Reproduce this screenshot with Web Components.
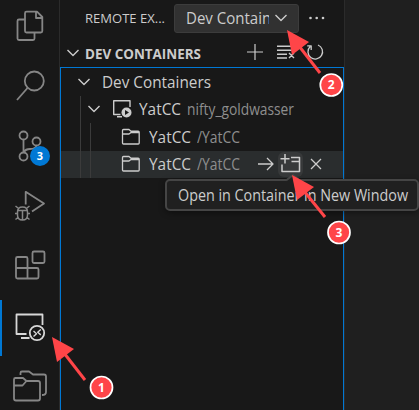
<!DOCTYPE html>
<html lang="en"><head><meta charset="utf-8"><title>Remote Explorer</title>
<style>html,body{margin:0;height:100%;overflow:hidden;background:#1f1f1f}body{font-family:"Open Sans","Noto Sans",sans-serif;color:#ccc}</style></head>
<body><remote-window></remote-window>
<script>
const define = (name, html, setup) => customElements.define(name, class extends HTMLElement {
  connectedCallback() {
    if (this.shadowRoot) return;
    this.attachShadow({mode: 'open'}).innerHTML = html;
    if (setup) setup(this, this.shadowRoot);
  }
});

const icons = {
  files: [60,60, '<path d="M25.500 19.500H19q-1.500 0-1.500 1.500v17.500q0 1.500 1.500 1.500h14q1.500 0 1.500-1.500V33M26.500 11.700H37L42.300 17v14q0 1.500-1.500 1.500H26.500Q25 32.500 25 31V13.200q0-1.500 1.500-1.500ZM36 12v6h6"/>'],
  search: [60,60, '<circle cx="34.300" cy="21" r="9.500"/><path d="M27.500 28 17 40"/>'],
  source: [60,60, '<circle cx="23.500" cy="15.500" r="4"/><circle cx="36.500" cy="21.500" r="4"/><circle cx="23.500" cy="36.500" r="4"/><path d="M23.500 19.500v13M24 32q1.500-3 6-3 6.500 0 6.500-4"/>'],
  debug: [60,60, '<path d="M25.700 24.500V11.800L44 23.500 32 31.500"/><path d="M17.500 32q0-5 5-5t5 5v3q0 5-5 5t-5-5ZM18 30.500h9M22.500 31v9M18 28l-2.500-2M27 28l2.500-2M17.500 33.500H15M27.500 33.500H30M18 37.500l-2.500 2M27 37.500l2.500 2" stroke-width="1.500"/>'],
  extensions: [60,60, '<path d="M17.500 17h8.500q1.500 0 1.500 1.500V28H37q1.500 0 1.500 1.500V37q0 1.500-1.500 1.500H17.500Q16 38.500 16 37V18.500Q16 17 17.500 17ZM16 28h11.500v10.500"/><rect x="32.500" y="11" width="12" height="11.500" rx="1.500" transform="translate(0 .5)"/>'],
  remote: [60,60, '<path d="M26.500 34H16.500V14.500H42.500V25M21 38h8.500"/><circle cx="37" cy="33" r="7.200"/><path d="M33.500 31l3 2.700-3 2.700M40.800 29.500l-3.100 2.700 3.100 2.700" stroke-width="1.400"/>'],
  folders: [60,60, '<path transform="translate(0 1)" d="M15.500 17h7.500l3.500 3H38q2 0 2 2v15.500q0 2-2 2H16q-2 0-2-2V18.500q0-1.500 1.500-1.500ZM14 24.500h8.500l3.500-4M20.500 14v-2q0-1.500 1.500-1.500h7l4 3H44q2 0 2 2V31q0 3-4 3"/>'],
  chevron: [14,10, '<path d="m1.500 2 5.500 5.500L12.500 2" stroke-width="1.400"/>'],
  plus: [18,18, '<path d="M9 1v16M1 9h16" stroke-width="1.200"/>'],
  clear: [20,18, '<path d="M1 3.200h16M1 7.200h16M1 11.200h10M1 15h10M13 10l5 5M18 10l-5 5" stroke-width="1.400"/>'],
  refresh: [18,18, '<path d="M4.200 3.500A7.300 7.300 0 1 0 12 2M1.200 2.800h4V7" stroke-width="1.300"/>'],
  more: [18,6, '<g fill="currentColor" stroke="none"><circle cx="2.500" cy="3" r="1.300"/><circle cx="8.700" cy="3" r="1.300"/><circle cx="15" cy="3" r="1.300"/></g>'],
  container: [20,20, '<path d="M8.500 15.500H1.700V1.700H18V8M5 17.800h5" stroke-width="1.400"/><circle cx="14.500" cy="13.500" r="5" fill="currentColor" stroke="none"/><path d="m13 11 4 2.500-4 2.500Z" fill="#181818" stroke="none"/>'],
  folder: [20,18, '<path d="M2.500 1.500H8l2 1.700h7.200q1 0 1 1V15q0 1-1 1H2.500q-1 0-1-1V2.500q0-1 1-1ZM1.500 6H8l2-1.500h8" stroke-width="1.300"/>'],
  arrow: [18,16, '<path d="M1 8h15M10 2l6 6-6 6" stroke-width="1.300"/>'],
  newwin: [24,20, '<path d="M6 0v9.500M1.500 4.700h9M12 3.500h8.500V17.500H3V10.500M12.500 7.500H20.500" stroke-width="1.500"/>'],
  close: [12,12, '<path d="m1 1 10 10M11 1 1 11" stroke-width="1.300"/>']
};
define('ui-icon', '<style>:host{display:block;flex:none}svg{display:block;fill:none;stroke:currentColor;stroke-width:1.800;stroke-linejoin:round}</style><div></div>', (el, root) => {
  const [w,h,shape] = icons[el.getAttribute('name')];
  root.querySelector('div').innerHTML = `<svg width="${w}" height="${h}" viewBox="0 0 ${w} ${h}">${shape}</svg>`;
});

/* A single line of text condensed to the width given by its "fit" attribute. */
define('ui-label', '<style>:host{display:block;flex:none;white-space:pre;line-height:22px}span{display:inline-block;transform-origin:0 50%}</style><span><slot></slot></span>', (el, root) => {
  const span = root.querySelector('span'), fit = +el.getAttribute('fit');
  el.style.width = fit + 'px';
  span.style.transform = `scaleX(${fit / span.getBoundingClientRect().width})`;
});

define('activity-entry', `<style>:host{display:block;flex:none;position:relative;width:59px;height:60px;color:#868686}:host([active]){color:#d7d7d7;box-shadow:inset 2px 0 #0078d4}
b{position:absolute;left:30px;top:26px;width:20px;height:20px;border-radius:50%;background:#0078d4;color:#fff;font:700 11px/20px "Open Sans",sans-serif;text-align:center}b:empty{display:none}</style><slot></slot><b></b>`, (el, root) => {
  root.querySelector('b').textContent = el.getAttribute('badge') || '';
});
define('activity-bar', `<style>:host{display:flex;flex-direction:column;box-sizing:border-box;width:60px;height:410px;flex:none;overflow:hidden;background:#181818;border-right:1px solid #2b2b2b}</style>
<activity-entry><ui-icon name="files"></ui-icon></activity-entry>
<activity-entry><ui-icon name="search"></ui-icon></activity-entry>
<activity-entry badge="3"><ui-icon name="source"></ui-icon></activity-entry>
<activity-entry><ui-icon name="debug"></ui-icon></activity-entry>
<activity-entry><ui-icon name="extensions"></ui-icon></activity-entry>
<activity-entry active style="height:56px;margin-bottom:4px"><ui-icon name="remote"></ui-icon></activity-entry>
<activity-entry><ui-icon name="folders"></ui-icon></activity-entry>`);

define('tree-row', `<style>:host{display:flex;box-sizing:border-box;height:27.500px;align-items:center;font-size:15.800px;position:relative}:host([selected]){background:#2a2d2e}
i{position:absolute;top:0;bottom:0;width:1px;background:#3b3b3b}.a{left:19px}.b{left:29px}:host([depth="0"]) i,:host([depth="1"]) .b{display:none}</style><i class="a"></i><i class="b"></i><slot></slot>`);

define('container-tree', `<style>:host{display:block;box-sizing:border-box;height:343px;border:1px solid #0078d4;border-bottom:0}
.muted{color:#8e8e8e}.chev{margin-left:16px}.f{margin-left:60px}.name{margin-left:7.500px}.path{margin-left:6.500px}.tool{display:grid;place-items:center;width:25px;height:25px;border-radius:6px;background:#37393a;margin-left:3px}</style>
<tree-row depth="0"><ui-icon class="chev" name="chevron"></ui-icon><ui-label fit="109" style="margin-left:10.500px">Dev Containers</ui-label></tree-row>
<tree-row depth="1"><ui-icon name="chevron" style="margin-left:26px"></ui-icon><ui-icon name="container" style="margin-left:11px"></ui-icon><ui-label fit="42" style="margin-left:6.500px">YatCC</ui-label><ui-label class="muted path" fit="107">nifty_goldwasser</ui-label></tree-row>
<tree-row depth="2"><ui-icon class="f" name="folder"></ui-icon><ui-label class="name" fit="42">YatCC</ui-label><ui-label class="muted path" fit="43">/YatCC</ui-label></tree-row>
<tree-row depth="2" selected><ui-icon class="f" name="folder"></ui-icon><ui-label class="name" fit="42">YatCC</ui-label><ui-label class="muted path" fit="43">/YatCC</ui-label><ui-icon name="arrow" style="margin-left:17px"></ui-icon><span class="tool"><ui-icon name="newwin"></ui-icon></span><ui-icon name="close" style="margin-left:7px"></ui-icon></tree-row>`);

define('side-bar', `<style>:host{display:block;box-sizing:border-box;width:285px;height:410px;flex:none;background:#181818;border-right:1px solid #2b2b2b}
header{display:flex;align-items:center;height:36px;padding-left:25px;font-size:13.500px}.select{box-sizing:border-box;display:flex;align-items:center;width:125px;height:29px;margin-left:9px;background:#313131;border:1px solid #3c3c3c;border-radius:3px;font-size:16.300px}
.clip{width:83px;overflow:hidden;margin-left:11px}.section{display:flex;align-items:center;height:31px;font-size:13.300px;font-weight:700;padding-left:6px}
.section ui-icon:first-child{margin-top:2px}.section ui-label{margin:4px 0 0 5px}</style>
<header><ui-label fit="80">REMOTE EX...</ui-label><div class="select"><div class="clip"><ui-label fit="107">Dev Containers</ui-label></div><ui-icon name="chevron" style="margin-left:5px"></ui-icon></div><ui-icon name="more" style="margin-left:9px"></ui-icon></header>
<div class="section"><ui-icon name="chevron"></ui-icon><ui-label fit="116">DEV CONTAINERS</ui-label><ui-icon name="plus" style="margin-left:45px"></ui-icon><ui-icon name="clear" style="margin-left:12px"></ui-icon><ui-icon name="refresh" style="margin-left:10px"></ui-icon></div>
<container-tree></container-tree>`);

define('hover-tip', `<style>:host{position:absolute;left:165px;top:179px;box-sizing:border-box;width:254px;height:32px;padding:3px 0 0 10.500px;background:#202020;border:2px solid #454545;border-radius:5px;font-size:15.800px;box-shadow:0 2px 6px #0006}
svg{position:absolute;left:118px;top:-7px}</style><ui-label fit="230">Open in Container in New Window</ui-label><svg width="16" height="8" viewBox="0 0 16 8"><path d="M1 6.500 8 1l7 5.500V8H1Z" fill="#202020"/><path d="M1 6.500 8 1l7 5.500" fill="none" stroke="#454545" stroke-width="2"/></svg>`);

define('step-marker', `<style>:host{position:absolute;width:90px;height:90px}svg{display:block;overflow:visible}text{font:700 12px "Open Sans",sans-serif;fill:#fff;text-anchor:middle}</style>
<svg width="90" height="90"><path stroke="#ff4548" stroke-width="3"/><path d="M0 0 22 12 5 25Z" fill="#ff4548"/><circle r="11" fill="#ff4548" stroke="#fff" stroke-width="1.700"/><text></text></svg>`, (el, root) => {
  const [x,y,cx,cy,ex,ey] = el.getAttribute('at').split(' ').map(Number);
  el.style.left = x + 'px'; el.style.top = y + 'px';
  root.querySelector('path').setAttribute('d', `M12 16 ${ex - x} ${ey - y}`);
  const c = root.querySelector('circle'), t = root.querySelector('text');
  c.setAttribute('cx', cx - x); c.setAttribute('cy', cy - y);
  t.setAttribute('x', cx - x); t.setAttribute('y', cy - y + 4.3);
  t.textContent = el.getAttribute('number');
});

define('remote-window', `<style>:host{display:flex;position:relative;width:419px;height:410px;overflow:hidden;background:#1f1f1f}</style>
<activity-bar></activity-bar><side-bar></side-bar><hover-tip></hover-tip>
<step-marker number="1" at="52 337 101.500 387.500 85 380"></step-marker>
<step-marker number="2" at="287 30 331.300 85 320 73"></step-marker>
<step-marker number="3" at="292 175 339 232.500 325 217"></step-marker>`);
</script>
</body></html>
